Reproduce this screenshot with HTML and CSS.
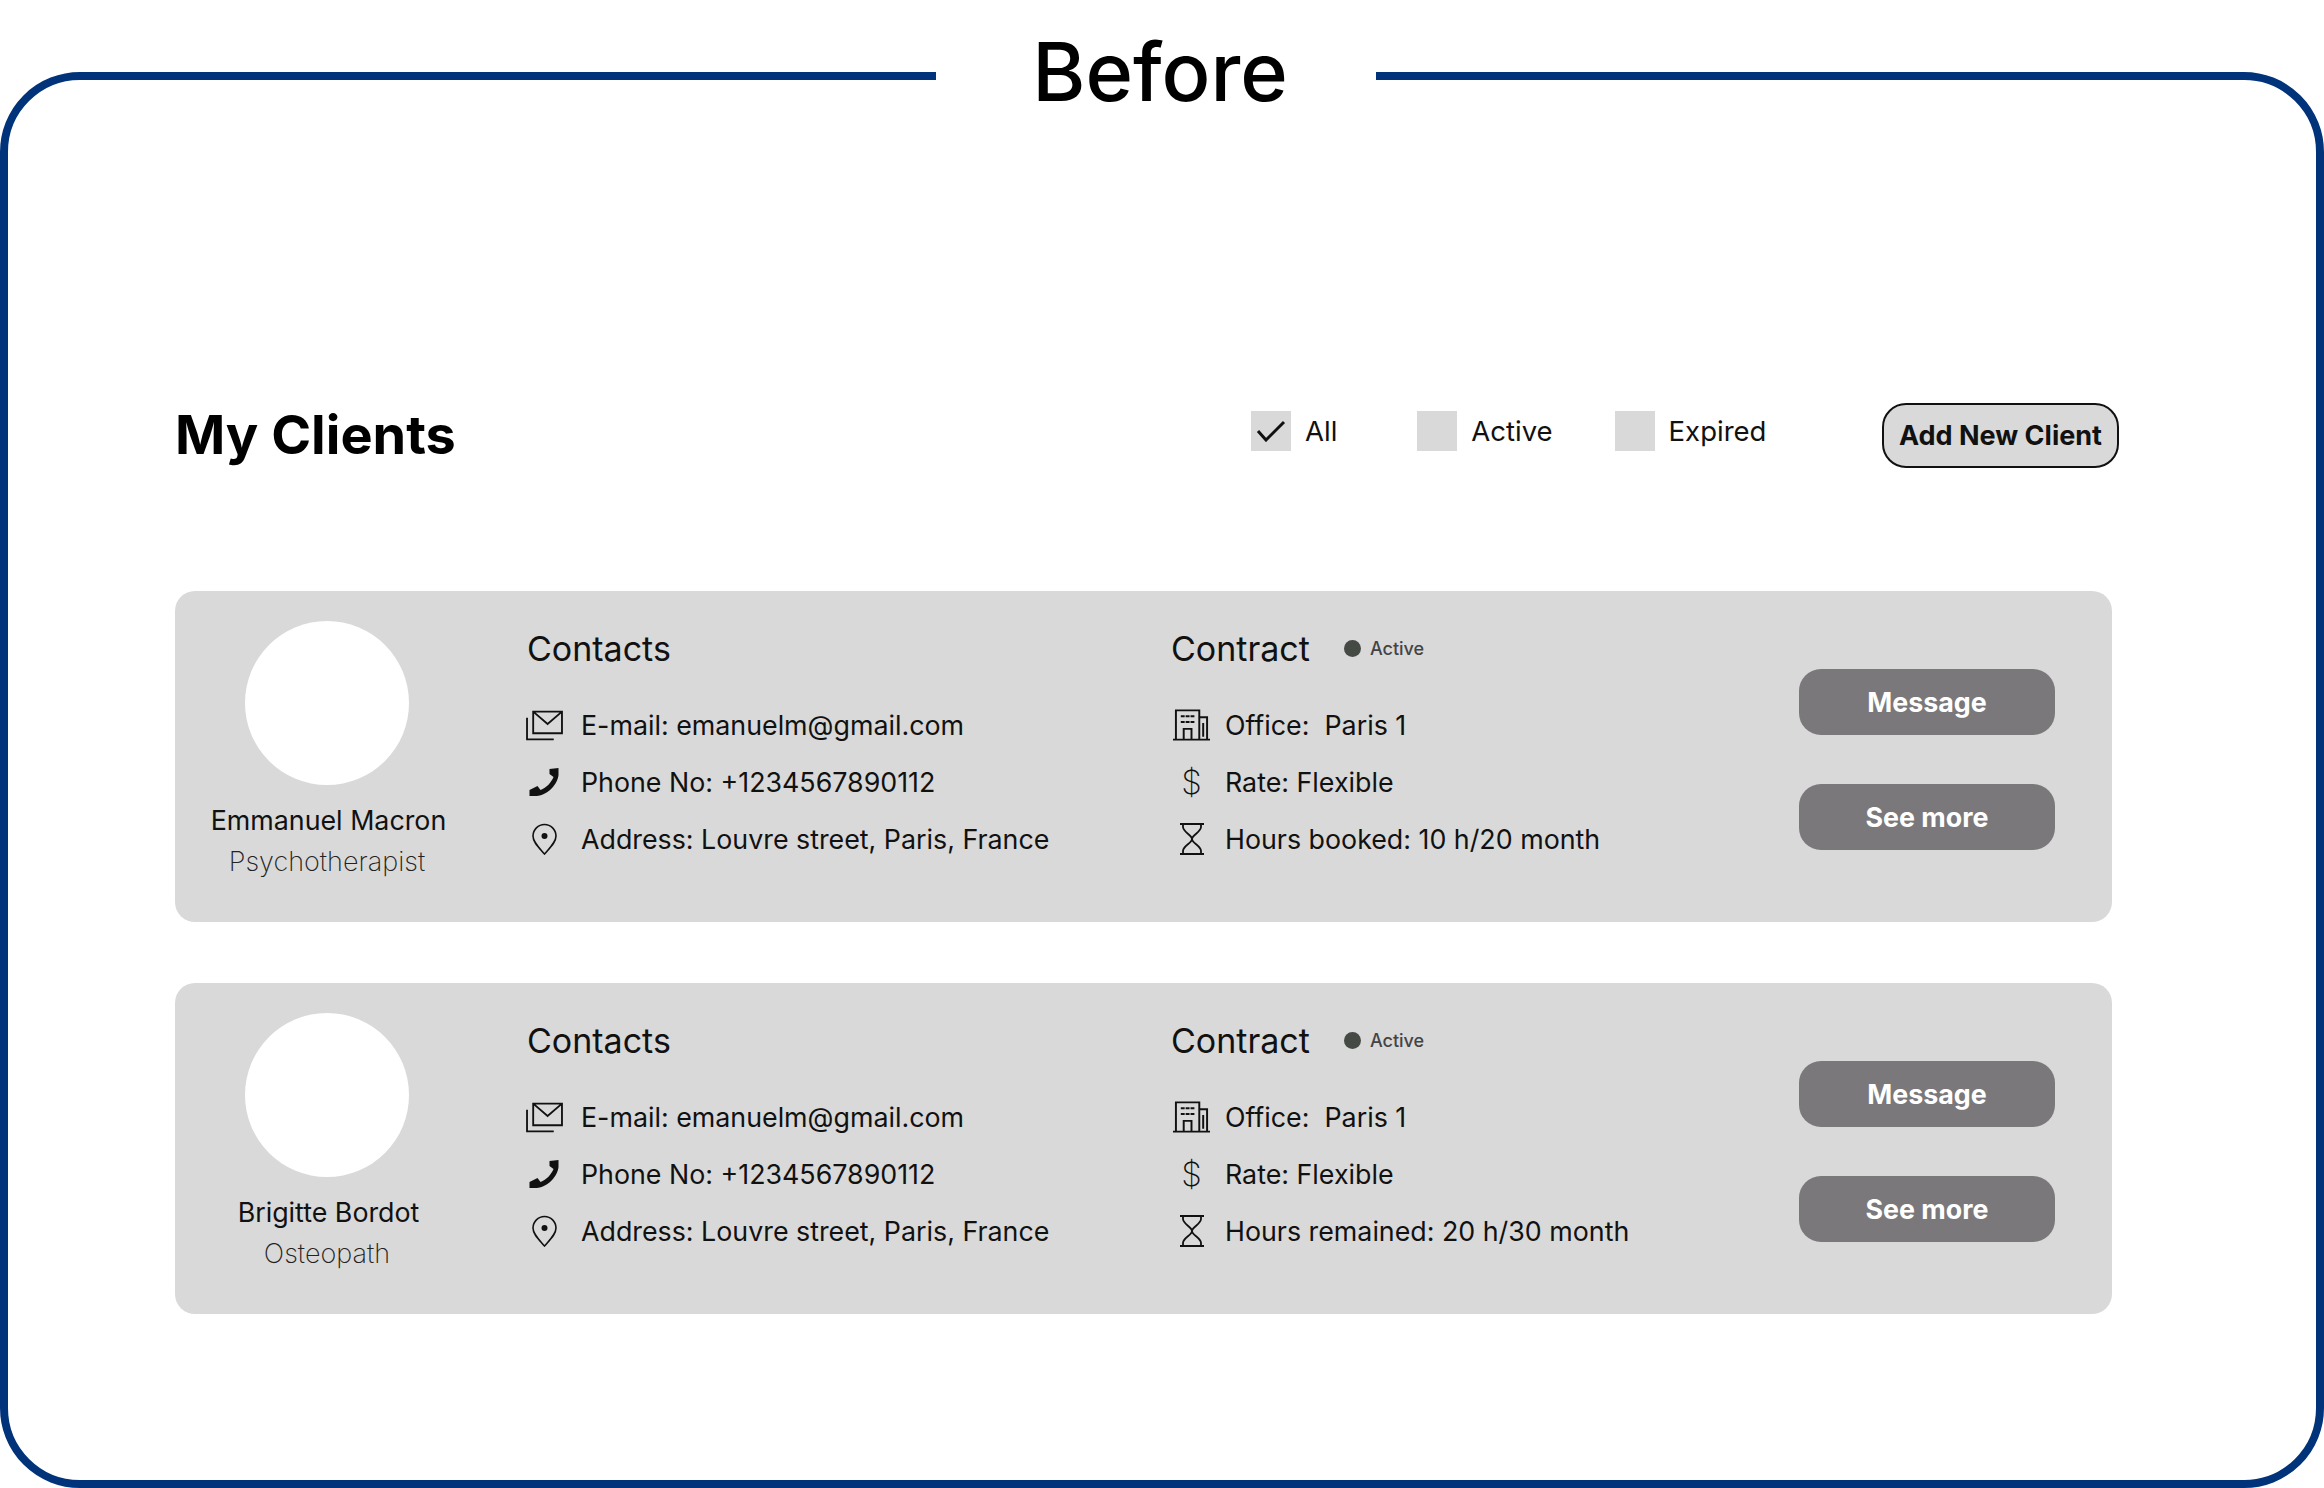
FILE: index.html
```html
<!DOCTYPE html>
<html lang="en">
<head>
  <meta charset="UTF-8">
  <title>My Clients</title>
  <link rel="stylesheet" href="styles.css">
</head>
<body>
  <svg class="sprite" width="0" height="0">
    <symbol id="i-mail" viewBox="0 0 36 30">
      <path d="M7 2h28v21H7zM7 2l14 12L35 2M1 8v21h26" fill="none" stroke="currentColor" stroke-width="1.8"/>
    </symbol>
    <symbol id="i-phone" viewBox="0 0 32 32">
      <path d="M21 3L30 2V9C29 18 20 29 8 30L1 30V24L9 20L12 24C18 22 23 16 25 11L21 8z" fill="currentColor"/>
    </symbol>
    <symbol id="i-pin" viewBox="0 0 26 32">
      <path d="M13 31C7 24 1.500 19 1.500 13a11.500 11.500 0 0 1 23 0C24.500 19 19 24 13 31z" fill="none" stroke="currentColor" stroke-width="1.600"/>
      <circle cx="13" cy="13" r="3" fill="currentColor"/>
    </symbol>
    <symbol id="i-office" viewBox="0 0 38 32">
      <path d="M0 31h38M3 31V1h24v30M27 8h8v23M11 31V20h8v11M31 14v14" fill="none" stroke="currentColor" stroke-width="2"/>
      <path d="M8 7h4M13 7h4M18 7h4M8 13h4M13 13h4M18 13h4" fill="none" stroke="currentColor" stroke-width="2"/>
    </symbol>
    <symbol id="i-hourglass" viewBox="-1.500 0 26 32">
      <path d="M0 1h24M0 31h24M3 1v3c0 5 9 8 9 12s-9 7-9 12v3M21 1v3c0 5-9 8-9 12s9 7 9 12v3" fill="none" stroke="currentColor" stroke-width="1.800"/>
    </symbol>
  </svg>

  <main class="frame">
    <h1 class="frame-title">Before</h1>

    <div class="toolbar">
      <h2 class="page-title">My Clients</h2>
      <div class="filters">
        <label class="filter filter-all">
          <span class="box">
            <svg width="30" height="22" viewBox="0 0 30 22"><path d="M2 11l8 9L28 2" fill="none" stroke="#111" stroke-width="3"/></svg>
          </span>
          All
        </label>
        <label class="filter"><span class="box"></span>Active</label>
        <label class="filter"><span class="box"></span>Expired</label>
      </div>
      <button class="add-btn">Add New Client</button>
    </div>

    <section class="client-card">
      <div class="person">
        <div class="avatar"></div>
        <div class="name">Emmanuel Macron</div>
        <div class="role">Psychotherapist</div>
      </div>
      <div class="contacts">
        <h3>Contacts</h3>
        <div class="row"><svg class="ico"><use href="#i-mail"/></svg>E-mail: emanuelm@gmail.com</div>
        <div class="row"><svg class="ico"><use href="#i-phone"/></svg>Phone No: +1234567890112</div>
        <div class="row"><svg class="ico"><use href="#i-pin"/></svg>Address: Louvre street, Paris, France</div>
      </div>
      <div class="contract">
        <h3>Contract <span class="status"><i class="dot"></i>Active</span></h3>
        <div class="row"><svg class="ico"><use href="#i-office"/></svg>Office:&nbsp; Paris 1</div>
        <div class="row"><span class="ico dollar">$</span>Rate: Flexible</div>
        <div class="row"><svg class="ico"><use href="#i-hourglass"/></svg>Hours booked: 10 h/20 month</div>
      </div>
      <div class="actions">
        <button class="btn">Message</button>
        <button class="btn">See more</button>
      </div>
    </section>

    <section class="client-card">
      <div class="person">
        <div class="avatar"></div>
        <div class="name">Brigitte Bordot</div>
        <div class="role">Osteopath</div>
      </div>
      <div class="contacts">
        <h3>Contacts</h3>
        <div class="row"><svg class="ico"><use href="#i-mail"/></svg>E-mail: emanuelm@gmail.com</div>
        <div class="row"><svg class="ico"><use href="#i-phone"/></svg>Phone No: +1234567890112</div>
        <div class="row"><svg class="ico"><use href="#i-pin"/></svg>Address: Louvre street, Paris, France</div>
      </div>
      <div class="contract">
        <h3>Contract <span class="status"><i class="dot"></i>Active</span></h3>
        <div class="row"><svg class="ico"><use href="#i-office"/></svg>Office:&nbsp; Paris 1</div>
        <div class="row"><span class="ico dollar">$</span>Rate: Flexible</div>
        <div class="row"><svg class="ico"><use href="#i-hourglass"/></svg>Hours remained: 20 h/30 month</div>
      </div>
      <div class="actions">
        <button class="btn">Message</button>
        <button class="btn">See more</button>
      </div>
    </section>
  </main>
</body>
</html>
```

FILE: styles.css
```css
body {
  margin: 0;
  background: #fff;
  color: #111;
  font-family: Inter, sans-serif;
}

.sprite {
  position: absolute;
}

.frame {
  position: relative;
  box-sizing: border-box;
  height: 1416px;
  margin-top: 72px;
  padding: 0 0 0 167px;
  border: 8px solid #00337a;
  border-radius: 80px;
}

.frame-title {
  position: absolute;
  top: -72px;
  left: 928px;
  box-sizing: border-box;
  width: 440px;
  height: 100px;
  margin: 0;
  padding-left: 8px;
  background: #fff;
  font-size: 81px;
  font-weight: 500;
  line-height: 128px;
  text-align: center;
  color: #000;
}

.toolbar {
  display: flex;
  align-items: center;
  height: 66px;
  padding-top: 322px;
  margin-bottom: 123px;
}

.page-title {
  width: 1076px;
  margin: 0 0 2px;
  font-size: 54px;
  font-weight: 700;
  color: #000;
}

.filters {
  display: flex;
  width: 631px;
  margin-bottom: 8px;
}

.filter {
  display: flex;
  align-items: center;
  gap: 14px;
  margin-right: 62px;
  font-size: 27.5px;
}

.filter-all {
  margin-right: 80px;
}

.box {
  display: flex;
  align-items: center;
  justify-content: center;
  width: 40px;
  height: 40px;
  background: #d9d9d9;
}

.add-btn {
  box-sizing: border-box;
  width: 237px;
  height: 65px;
  padding: 0;
  background: #d9d9d9;
  border: 2px solid #111;
  border-radius: 24px;
  font-family: inherit;
  font-size: 27px;
  font-weight: 700;
  color: #111;
}

.client-card {
  display: flex;
  box-sizing: border-box;
  width: 1937px;
  height: 331px;
  margin-bottom: 61px;
  background: #d9d9d9;
  border-radius: 20px;
}

.person {
  display: flex;
  flex-direction: column;
  align-items: center;
  width: 304px;
  margin-right: 48px;
  padding-top: 30px;
}

.avatar {
  width: 164px;
  height: 164px;
  border-radius: 50%;
  background: #fff;
}

.name {
  margin-top: 17px;
  padding-left: 3px;
  font-size: 26.8px;
  line-height: 36px;
}

.role {
  margin-top: 6px;
  font-size: 27px;
  font-weight: 200;
  line-height: 36px;
  color: #222;
}

.contacts,
.contract {
  padding-top: 37px;
}

.contacts {
  width: 644px;
}

.contract {
  width: 628px;
}

h3 {
  display: flex;
  align-items: center;
  height: 40px;
  margin: 0 0 28px;
  font-size: 34px;
  font-weight: 400;
}

.row {
  display: flex;
  align-items: center;
  height: 57px;
  font-size: 26.8px;
}

.ico {
  flex: none;
  width: 37px;
  height: 32px;
  margin-right: 17px;
  color: #111;
}

.contacts .ico {
  margin-left: -1px;
  margin-right: 18px;
}

.contract .ico {
  margin-left: 2px;
  margin-right: 15px;
}

.dollar {
  font-size: 33px;
  font-weight: 200;
  line-height: 32px;
  text-align: center;
}

.status {
  display: flex;
  align-items: center;
  margin-left: 34px;
  font-size: 18px;
  font-weight: 500;
  color: #444;
}

.dot {
  width: 17px;
  height: 17px;
  margin-right: 9px;
  border-radius: 50%;
  background: #454a45;
}

.actions {
  display: flex;
  flex-direction: column;
  gap: 49px;
  width: 256px;
  padding-top: 78px;
}

.btn {
  height: 66px;
  padding: 0;
  border: 0;
  border-radius: 22px;
  background: #7a787a;
  font-family: inherit;
  font-size: 26.8px;
  font-weight: 700;
  color: #fff;
}
```
